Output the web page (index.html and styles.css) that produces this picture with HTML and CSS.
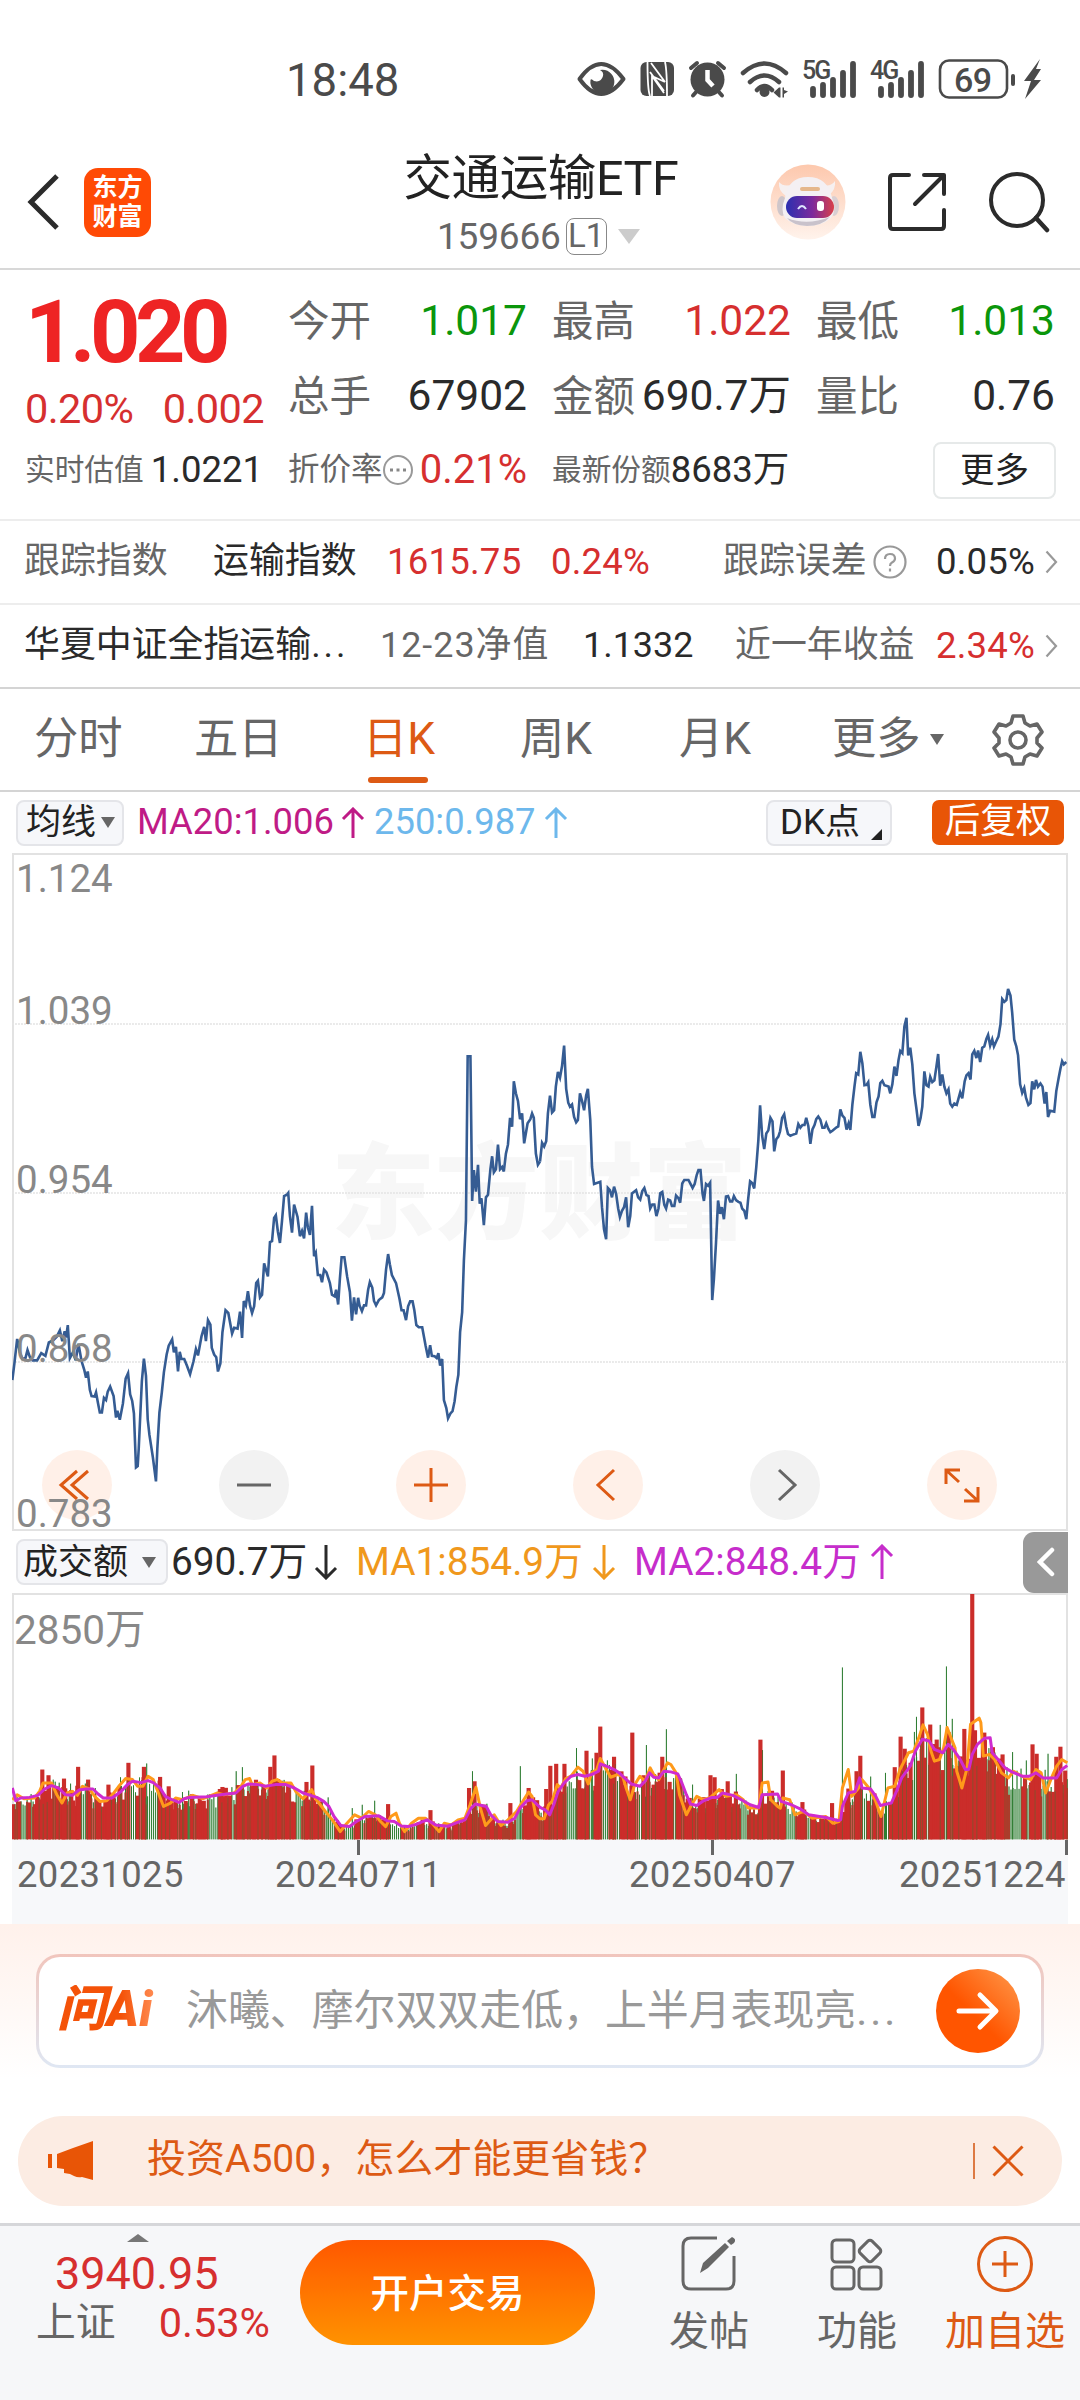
FILE: index.html
```html
<!DOCTYPE html>
<html lang="zh-CN">
<head>
    <meta charset="UTF-8">
    <meta name="viewport" content="width=device-width, initial-scale=1.0">
    <title>交通运输ETF 159666</title>
    <link rel="stylesheet" href="styles.css">
</head>
<body>
    <div class="status-bar">
        <span class="time">18:48</span>
        <svg class="status-icons" width="470" height="44" viewBox="574 57 470 44">
            <g fill="none" stroke="#4a4a4a" stroke-width="4">
                <path d="M579.500 79Q601 49 623.500 79Q601 109 579.500 79Z" stroke-linejoin="round"/>
                <path d="M743 73Q764.500 54 786 73M750 82Q764.500 69 779 82M757 90Q764.500 82 772 90" stroke-width="4.500" stroke-linecap="round"/>
                <path d="M691 68L697 63M718 63L724 68M697 91L693 95.500M718 91L722 95.500" stroke-linecap="round"/>
                <rect x="940" y="60.500" width="67" height="37" rx="9" stroke-width="2.600"/>
                <path d="M813 89V95M823 85V95M833 80V95M843 73V95M853 64V95M881 89V95M891 85V95M901 80V95M911 73V95M921 64V95" stroke-width="5.800" stroke-linecap="round"/>
                <path d="M1013 76V84" stroke-linecap="round"/>
            </g>
            <g fill="#4a4a4a">
                <path d="M600 70A12 12 0 1 1 590.500 80Q591 78 594 81Q601 83 603 76Q604 72 600 70Z"/>
                <rect x="640.500" y="62" width="33.500" height="34" rx="6"/>
                <circle cx="707.500" cy="79.500" r="17"/>
                <circle cx="764.500" cy="92" r="5"/>
                <path d="M773.500 92.500L779 87.500V97.500ZM779 87.500H780.500V97.500H779ZM782.500 87.500V97.500H784V94L788 91.500L784 90V87.500Z"/>
                <path d="M1040 59L1024 81H1031L1025 99L1041 80H1034L1041 69H1036Z"/>
            </g>
            <path d="M650 96Q647.500 90 647.500 62M651 63L665 82M652 96V76L664 93M652 76L665 82M665 62Q667 70 667 96M650 72L664 91" fill="none" stroke="#fff" stroke-width="1.800"/>
            <path d="M707.500 70V80L713 86" fill="none" stroke="#fff" stroke-width="4.500"/>
            <text class="net-label" x="802" y="79">5G</text>
            <text class="net-label" x="870" y="79">4G</text>
            <text class="battery-label" x="954" y="91.500">69</text>
        </svg>
    </div>

    <header class="header">
        <div class="header-left">
            <svg width="34" height="58" viewBox="0 0 34 58"><path d="M30 3L4 29L30 55" fill="none" stroke="#2b2b2b" stroke-width="5"/></svg>
            <div class="app-logo">东方<br>财富</div>
        </div>
        <div class="header-title">
            <h1>交通运输ETF</h1>
            <div class="code">159666<span class="level">L1</span><i class="tri tri-light"></i></div>
        </div>
        <div class="header-right">
            <svg width="76" height="76" viewBox="0 0 76 76">
                <defs>
                    <linearGradient id="avatarBg" x1="0" y1="0" x2="0" y2="1"><stop offset="0" stop-color="#fdc8ad"/><stop offset="1" stop-color="#fff3ec"/></linearGradient>
                    <linearGradient id="visor" x1="0" y1="0" x2="1" y2="0"><stop offset="0" stop-color="#2b2fb0"/><stop offset=".55" stop-color="#7d2a9c"/><stop offset="1" stop-color="#d8404a"/></linearGradient>
                </defs>
                <circle cx="38" cy="38" r="37.500" fill="url(#avatarBg)"/>
                <ellipse cx="12" cy="42" rx="5" ry="10" fill="#cfc6ca"/><ellipse cx="64" cy="42" rx="5" ry="10" fill="#d9cfd2"/>
                <path d="M9 18Q8 27 16 32L24 20Q14 24 9 18ZM65 17Q66 26 59 31L51 20Q60 24 65 17Z" fill="#f6f0f0"/>
                <path d="M15 34Q18 13 38 13Q58 13 62 34Q67 46 61 54Q52 62 37 62Q22 61 15 54Q10 46 15 34Z" fill="#f4f0f3"/>
                <path d="M17 54Q37 62 60 53Q52 62 37 62Q22 61 17 54Z" fill="#c9c2cb"/>
                <rect x="30" y="23" width="20" height="4" rx="2" fill="#e5b78c"/>
                <rect x="16" y="32" width="48" height="22" rx="11" fill="url(#visor)"/>
                <path d="M28 45Q32 39 36 45" fill="none" stroke="#dfe6ff" stroke-width="2"/>
                <rect x="47" y="37" width="7" height="10" rx="3" fill="#fff"/>
            </svg>
            <svg width="60" height="60" viewBox="0 0 60 60"><path d="M22 3H6Q3 3 3 6V54Q3 57 6 57H54Q57 57 57 54V38M37 3H57V22M56 4L28 32" fill="none" stroke="#2b2b2b" stroke-width="4" stroke-linecap="round" stroke-linejoin="round"/></svg>
            <svg width="62" height="64" viewBox="0 0 62 64"><circle cx="29" cy="30" r="26" fill="none" stroke="#2b2b2b" stroke-width="4"/><path d="M48 48L59 60" stroke="#2b2b2b" stroke-width="4.500" stroke-linecap="round"/></svg>
        </div>
    </header>

    <section class="quote">
        <div class="price-box">
            <div class="price">1.020</div>
            <div class="change"><span>0.20%</span><span>0.002</span></div>
        </div>
        <div class="quote-grid">
            <div class="cell"><span>今开</span><b class="green">1.017</b></div>
            <div class="cell"><span>最高</span><b class="red">1.022</b></div>
            <div class="cell"><span>最低</span><b class="green">1.013</b></div>
            <div class="cell"><span>总手</span><b>67902</b></div>
            <div class="cell"><span>金额</span><b>690.7万</b></div>
            <div class="cell"><span>量比</span><b>0.76</b></div>
        </div>
    </section>
    <section class="quote-sub">
        <div class="cell small"><span>实时估值</span><b>1.0221</b></div>
        <div class="cell small"><span class="rate">折价率</span>
            <svg width="32" height="32" viewBox="0 0 32 32"><circle cx="16" cy="16" r="14" fill="none" stroke="#999" stroke-width="2"/><path d="M8 16H11M14.500 16H17.500M21 16H24" stroke="#888" stroke-width="3"/></svg>
            <b class="red big">0.21%</b></div>
        <div class="cell small"><span>最新份额</span><b>8683万</b></div>
        <button class="more-btn">更多</button>
    </section>

    <section class="info-row track-row">
        <span>跟踪指数</span>
        <span class="dark">运输指数</span>
        <span class="red num">1615.75</span>
        <span class="red num">0.24%</span>
        <span class="tip">跟踪误差<svg width="34" height="34" viewBox="0 0 34 34"><circle cx="17" cy="17" r="15.500" fill="none" stroke="#999" stroke-width="2.200"/><path d="M12 14Q12 9 17 9Q22 9 22 13.500Q22 16 19 17.500Q17 18.500 17 21M17 23.500V26.500" fill="none" stroke="#999" stroke-width="2.200"/></svg></span>
        <span class="dark num">0.05%</span>
        <svg class="chev" width="13" height="24" viewBox="0 0 13 24"><path d="M1.500 1.500L11 12L1.500 22.500" fill="none" stroke="#999" stroke-width="2.200"/></svg>
    </section>
    <section class="info-row fund-row">
        <span class="dark">华夏中证全指运输<span class="dots">...</span></span>
        <span class="nav-date">12-23净值</span>
        <span class="dark">1.1332</span>
        <span>近一年收益</span>
        <span class="red num">2.34%</span>
        <svg class="chev" width="13" height="24" viewBox="0 0 13 24"><path d="M1.500 1.500L11 12L1.500 22.500" fill="none" stroke="#999" stroke-width="2.200"/></svg>
    </section>

    <nav class="tabs">
        <span>分时</span>
        <span>五日</span>
        <span class="active">日K</span>
        <span>周K</span>
        <span>月K</span>
        <span>更多<i class="tri tri-small"></i></span>
        <svg width="54" height="54" viewBox="0 0 54 54"><path d="M22 3H32L34 10L39 13L46 11L51 19L46 25V30L51 35L46 43L39 41L34 44L32 51H22L20 44L15 41L8 43L3 35L8 30V25L3 19L8 11L15 13L20 10Z" fill="none" stroke="#666" stroke-width="3.600" stroke-linejoin="round"/><circle cx="27" cy="27" r="8" fill="none" stroke="#666" stroke-width="3.600"/></svg>
    </nav>

    <div class="ma-row">
        <span class="select ma-select">均线<i class="tri tri-small"></i></span>
        <span class="ma20">MA20:1.006</span>
        <svg class="arrow ma20" width="24" height="32" viewBox="0 0 24 32"><path d="M12 31V2M2 12L12 2L22 12"/></svg>
        <span class="ma250">250:0.987</span>
        <svg class="arrow ma250" width="24" height="32" viewBox="0 0 24 32"><path d="M12 31V2M2 12L12 2L22 12"/></svg>
        <span class="select dk">DK点<i class="corner"></i></span>
        <span class="adjust">后复权</span>
    </div>

    <div class="chart">
        <div class="watermark">东方财富</div>
        <svg class="chart-svg" viewBox="35 9 3066 1514" preserveAspectRatio="none">
            <path class="grid-line" d="M35 390H3101M35 768H3101M35 1147H3101"/>
            <polyline class="price-line" points="36,1187 42,1150 50,1095 58,1125 65,1140 74,1138 80,1120 87,1136 95,1143 108,1143 120,1127 132,1133 142,1103 155,1098 165,1090 174,1076 181,1100 188,1078 192,1092 197,1064 203,1138 212,1125 220,1143 228,1106 237,1145 245,1165 250,1182 255,1168 261,1209 266,1223 275,1224 279,1215 285,1240 290,1260 296,1260 302,1227 308,1232 313,1213 320,1202 330,1223 337,1271 341,1256 348,1276 357,1240 365,1184 372,1172 378,1219 384,1234 389,1262 395,1383 400,1380 403,1340 412,1190 418,1139 424,1178 429,1275 434,1310 444,1360 453,1414 457,1340 463,1260 470,1215 476,1170 484,1130 490,1110 500,1096 505,1125 511,1113 517,1168 522,1124 527,1140 535,1140 543,1155 552,1174 562,1145 569,1118 575,1132 585,1090 593,1068 598,1100 604,1053 611,1063 615,1115 622,1130 628,1136 633,1168 640,1150 646,1080 655,1031 663,1037 674,1083 680,1070 690,1072 697,1034 703,1093 708,1010 714,1020 720,988 726,1020 732,1037 738,1022 744,970 749,965 755,1002 761,996 767,926 778,955 784,878 790,876 796,824 801,818 807,855 813,880 819,830 825,775 833,772 837,768 842,820 848,857 854,794 864,822 871,865 877,853 883,870 889,812 894,845 900,862 906,797 912,910 917,902 923,952 930,952 935,968 941,940 948,946 958,970 964,996 972,1000 976,985 982,1018 987,960 992,912 1000,912 1008,955 1016,990 1022,1054 1028,1002 1034,1040 1040,1003 1044,1020 1051,1033 1057,1020 1063,1020 1069,985 1074,968 1081,980 1086,1010 1092,1020 1100,1008 1110,1002 1115,992 1121,940 1127,905 1132,928 1138,952 1150,970 1160,1005 1166,1031 1172,1031 1179,1053 1185,1022 1191,1011 1198,1011 1203,1030 1209,1064 1216,1069 1226,1069 1236,1111 1243,1137 1249,1109 1254,1133 1262,1134 1268,1138 1273,1127 1278,1155 1284,1140 1289,1232 1296,1250 1301,1273 1308,1262 1314,1257 1320,1235 1325,1203 1331,1175 1336,1080 1342,1035 1347,920 1353,830 1358,462 1366,462 1371,786 1376,717 1382,765 1388,705 1393,792 1398,780 1405,840 1411,778 1417,772 1424,715 1429,686 1434,722 1440,715 1446,660 1452,715 1458,710 1463,720 1469,680 1475,660 1481,600 1487,620 1492,518 1498,545 1504,562 1510,603 1516,590 1522,657 1532,612 1540,603 1545,590 1550,600 1556,680 1562,705 1568,698"/>
            <polyline class="price-line" transform="translate(1568 0)" points="0,698 6,656 12,664 18,652 23,590 29,550 35,588 41,583 46,530 52,497 58,510 64,484 70,438 76,535 82,566 87,575 93,570 99,598 105,610 110,605 116,545 122,562 128,583 134,550 139,535 146,605 151,710 157,748 175,743 180,800 186,850 192,872 197,757 203,762 209,778 215,754 221,770 227,803 232,822 238,808 244,800 250,778 256,845 262,820 267,769 279,762 285,778 291,783 297,764 303,757 309,773 315,775 320,803 326,794 332,794 338,820 344,803 349,769 355,766 361,795 366,803 372,783 378,785 383,797 390,797 395,774 402,780 407,790 413,747 419,739 431,739 437,748 443,757 449,748 455,728 460,717 466,717 472,770 476,786 482,748 488,752 494,745 500,1008 505,960 511,880 517,785 523,815 528,800 534,827 540,776 546,775 552,787 558,787 563,775 569,784 576,788 582,790 587,803 593,808 599,827 604,785 610,742 616,746 622,758 628,710 634,650 639,572 645,640 651,670 657,635 663,628 669,600 675,608 680,675 686,648 692,642 697,630 703,600 709,592 715,620 720,636 727,640 733,638 744,635 750,614 756,622 762,616 768,616 773,600 779,618 785,658 791,626 797,616 802,603 808,597 814,604 820,622 826,622 831,612 837,624 843,632 849,629 861,621 866,619 872,581 878,595 884,600 890,626 896,612 901,627 907,570 913,530 918,500 924,503 930,452 936,478 942,527 948,526 953,520 959,570 965,598 971,598 977,565 983,552 988,522 994,517 1000,527 1012,530 1017,545 1023,525 1029,485 1035,506 1041,470 1046,450 1052,455 1058,395 1064,376 1069,460 1075,443 1081,480 1087,545 1093,580 1099,618 1105,600 1110,575 1116,496 1122,527 1128,530 1133,508 1139,520 1145,516 1151,485 1156,457 1162,528 1168,503 1174,530 1180,545 1186,536 1191,568 1197,575 1203,568 1210,571 1220,543 1226,556 1233,518 1238,505 1244,500 1250,514 1255,458 1261,450 1267,466 1272,449 1278,475 1284,443 1290,440 1296,423 1301,414 1307,438 1313,424 1318,440 1325,428 1331,418 1337,390 1342,334 1348,340 1354,336 1359,311 1366,326 1371,365 1377,425 1383,440 1388,460 1394,525 1400,544 1406,533 1411,555 1418,571 1424,567 1429,518 1435,536 1440,515 1446,530 1453,523 1459,530 1465,568 1470,542 1475,598 1481,584 1493,586 1499,540 1506,510 1511,490 1516,473 1521,480 1528,475"/>
        </svg>
        <div class="tools">
            <svg class="tool warm" viewBox="0 0 70 70"><path d="M35 21L19 35L35 49M46 21L30 35L46 49"/></svg>
            <svg class="tool" viewBox="0 0 70 70"><path d="M18 35H52"/></svg>
            <svg class="tool warm" viewBox="0 0 70 70"><path d="M18 35H52M35 18V52"/></svg>
            <svg class="tool warm" viewBox="0 0 70 70"><path d="M41 20L25 35L41 50"/></svg>
            <svg class="tool" viewBox="0 0 70 70"><path d="M29 20L45 35L29 50"/></svg>
            <svg class="tool warm" viewBox="0 0 70 70"><path d="M19 34V20H33M20 21L32 32M51 37V51H37M50 50L38 39"/></svg>
        </div>
        <div class="y-labels">
            <span>1.124</span>
            <span>1.039</span>
            <span>0.954</span>
            <span>0.868</span>
            <span>0.783</span>
        </div>
    </div>

    <div class="vol-row">
        <span class="select vol-select">成交额<i class="tri tri-small"></i></span>
        <span class="dark vol-now">690.7万</span>
        <svg class="arrow dark" width="24" height="36" viewBox="0 0 24 36"><path d="M12 1V34M2 24L12 34L22 24"/></svg>
        <span class="vol-ma1">MA1:854.9万</span>
        <svg class="arrow vol-ma1" width="24" height="36" viewBox="0 0 24 36"><path d="M12 1V34M2 24L12 34L22 24"/></svg>
        <span class="vol-ma2">MA2:848.4万</span>
        <svg class="arrow vol-ma2" width="24" height="36" viewBox="0 0 24 36"><path d="M12 35V2M2 12L12 2L22 12"/></svg>
        <span class="side-tab"><svg width="18" height="30" viewBox="0 0 18 30"><path d="M15 3L3 15L15 27" fill="none" stroke="#fff" stroke-width="4.500" stroke-linecap="round"/></svg></span>
    </div>
    <div class="vol-chart">
        <svg class="chart-svg" id="volume" viewBox="35 222 3066 733" preserveAspectRatio="none"></svg>
        <span class="vol-max">2850万</span>
    </div>
    <div class="date-axis">
        <span>20231025</span>
        <span class="d2">20240711</span>
        <span class="d3">20250407</span>
        <span class="d4">20251224</span>
    </div>

    <section class="ai-area">
        <div class="ai-box">
            <span class="ai-logo">问Ai</span>
            <span class="ai-text">沐曦、摩尔双双走低，上半月表现亮<span class="dots">...</span></span>
            <span class="ai-go"><svg width="44" height="40" viewBox="0 0 44 40"><path d="M3 20H39M24 4L40 20L24 36" fill="none" stroke="#fff" stroke-width="5" stroke-linecap="round" stroke-linejoin="round"/></svg></span>
        </div>
        <div class="promo">
            <svg width="46" height="40" viewBox="0 0 46 40"><path d="M0 13H4V27H0ZM9 13L25 7L45 0V39L34 36Q30 37 26 35L22 33L16 32V28L9 27Z" fill="#e85506"/></svg>
            <span class="promo-text">投资A500，怎么才能更省钱？</span>
            <i class="promo-line"></i>
            <svg width="32" height="32" viewBox="0 0 32 32"><path d="M1.500 1.500L30.500 30.500M30.500 1.500L1.500 30.500" stroke="#dd5a14" stroke-width="3"/></svg>
        </div>
    </section>

    <footer class="bottom-bar">
        <div class="index-box">
            <i class="tri-up"></i>
            <div class="index-value">3940.95</div>
            <div class="index-line"><span>上证</span><b>0.53%</b></div>
        </div>
        <button class="trade-btn">开户交易</button>
        <div class="action post">
            <svg width="56" height="56" viewBox="0 0 56 56"><path d="M36 2H10Q2 2 2 10V45Q2 53 10 53H45Q53 53 53 45V20" fill="none" stroke="#666" stroke-width="3"/><path d="M19 37L22 27L44 7L48 11L27 32ZM46 5L51 1Q56 3 53 7L50 9Z" fill="#666"/></svg>
            <span>发帖</span>
        </div>
        <div class="action func">
            <svg width="56" height="56" viewBox="0 0 56 56"><g fill="none" stroke="#666" stroke-width="3"><rect x="3" y="4" width="22" height="22" rx="4"/><rect x="3" y="31" width="22" height="22" rx="4"/><rect x="30" y="31" width="22" height="22" rx="4"/><rect x="32.500" y="6.500" width="17" height="17" rx="3" transform="rotate(45 41 15)"/></g></svg>
            <span>功能</span>
        </div>
        <div class="action fav">
            <svg width="56" height="56" viewBox="0 0 56 56"><circle cx="28" cy="28" r="26.500" fill="none" stroke="#dd5a14" stroke-width="3"/><path d="M15 28H41M28 15V41" stroke="#dd5a14" stroke-width="3"/></svg>
            <span>加自选</span>
        </div>
    </footer>

    <script src="chart.js"></script>
</body>
</html>
```
FILE: styles.css
```css
* {
    box-sizing: border-box;
}

body {
    margin: 0;
    width: 1080px;
    height: 2400px;
    overflow: hidden;
    background: #fff;
    color: #666;
    font-family: Roboto, "Noto Sans CJK SC", sans-serif;
    line-height: 1;
    white-space: nowrap;
}

i {
    display: inline-block;
}

svg {
    display: block;
    flex-shrink: 0;
}

b {
    font-weight: 400;
    color: #2a2a2a;
}

.dark {
    color: #2a2a2a;
}

.red {
    color: #d62f2f;
}

.green {
    color: #0b960b;
}

/* 状态栏 */
.status-bar {
    display: flex;
    align-items: center;
    height: 158px;
    padding: 0 36px 0 286px;
}

.time {
    width: 288px;
    padding-top: 3px;
    font-size: 45.5px;
    color: #4a4a4a;
}

.net-label {
    font-size: 25px;
    font-weight: 500;
    letter-spacing: -2px;
    fill: #4a4a4a;
}

.battery-label {
    font-size: 34px;
    font-weight: 500;
    letter-spacing: -0.5px;
    fill: #4a4a4a;
}

/* 顶部标题 */
.header {
    display: grid;
    grid-template-columns: 404px 274px 1fr;
    height: 112px;
    padding-bottom: 2px;
    border-bottom: 2px solid #d8d8d8;
}

.header-left {
    display: flex;
    align-items: center;
    padding: 0 0 20px 27px;
    gap: 23px;
}

.app-logo {
    width: 67px;
    height: 69px;
    padding-top: 5px;
    border-radius: 14px;
    background: #ff4a05;
    color: #fff;
    font-size: 25px;
    font-weight: 700;
    line-height: 29px;
    text-align: center;
}

.header-title {
    display: flex;
    flex-direction: column;
    align-items: center;
    margin-top: -3px;
}

h1 {
    margin: 0;
    font-size: 48.5px;
    font-weight: 400;
    color: #222;
    letter-spacing: -0.4px;
}

.code {
    display: flex;
    align-items: center;
    align-self: flex-start;
    margin: 14px 0 0 33px;
    font-size: 37px;
    letter-spacing: -0.2px;
}

.level {
    width: 41px;
    height: 37px;
    margin-left: 5px;
    border: 1.5px solid #888;
    border-radius: 8px;
    font-size: 33px;
    line-height: 34px;
    text-align: center;
}

.tri {
    border-style: solid;
    border-color: #666 transparent transparent;
    border-width: 11px 7.5px 0;
}

.tri-light {
    border-width: 15px 11px 0;
    border-top-color: #ccc;
    margin-left: 11px;
}

.header-right {
    display: flex;
    align-items: center;
    padding: 0 0 20px 92px;
    gap: 41px;
}

/* 行情 */
.quote {
    display: flex;
    height: 162px;
    padding-left: 25px;
}

.price-box {
    width: 263px;
}

.price {
    margin-top: 18px;
    font-size: 88px;
    font-weight: 700;
    letter-spacing: -5.5px;
    color: #ee2424;
}

.change {
    display: flex;
    justify-content: space-between;
    width: 239px;
    margin-top: 12px;
    font-size: 41.5px;
    letter-spacing: -0.6px;
    color: #d62f2f;
}

.quote-grid {
    display: grid;
    grid-template-columns: 239px 239px 239px;
    grid-template-rows: 75px 75px;
    column-gap: 25px;
    padding-top: 14px;
}

.cell {
    display: flex;
    align-items: center;
    justify-content: space-between;
    font-size: 41.5px;
}

.cell b {
    font-size: 42.5px;
}

.cell b.red {
    color: #d62f2f;
}

.cell b.green {
    color: #0b960b;
}

.quote-sub {
    display: grid;
    grid-template-columns: 238px 239px 237px 1fr;
    column-gap: 25px;
    align-items: center;
    height: 87px;
    padding: 0 24px 11px 25px;
}

.cell.small {
    font-size: 29.7px;
}

.cell.small b {
    font-size: 36.5px;
}

.cell.small b.big {
    font-size: 40px;
}

.rate {
    font-size: 31.5px;
    margin-right: -6px;
}

.more-btn {
    justify-self: end;
    width: 123px;
    height: 57px;
    border: 2px solid #e6e9e9;
    border-radius: 8px;
    background: #fff;
    color: #222;
    font: 34.5px/1 "Noto Sans CJK SC", sans-serif;
    padding: 0 0 5px;
}

/* 指数信息 */
.info-row {
    display: grid;
    align-items: center;
    padding-left: 24px;
    font-size: 35.9px;
    border-top: 2px solid #ededed;
}

.num {
    font-size: 36.6px;
    letter-spacing: 0.2px;
}

.track-row {
    height: 84px;
    grid-template-columns: 189px 174px 164px 172px 213px 109px 13px;
}

.fund-row {
    height: 84px;
    grid-template-columns: 356px 203px 152px 201px 109px 13px;
}

.dots {
    letter-spacing: 3px;
}

.nav-date {
    letter-spacing: 1px;
}

.tip {
    display: flex;
    align-items: center;
    gap: 6px;
}

/* 周期切换 */
.tabs {
    display: grid;
    grid-template-columns: 160px 169px 157px 159px 153px 159px 54px;
    align-items: center;
    height: 105px;
    padding-left: 34px;
    border-top: 2px solid #d4d4d4;
    border-bottom: 2px solid #d4d4d4;
    font-size: 44.3px;
}

.tabs span {
    display: flex;
    align-items: center;
    height: 100%;
}

.tabs .tri {
    margin-left: 9px;
}

.tabs .active {
    position: relative;
    color: #dd5a14;
}

.tabs .active::after {
    content: "";
    position: absolute;
    left: 5px;
    bottom: 7px;
    width: 60px;
    height: 6px;
    border-radius: 3px;
    background: #dd5a14;
}

/* 均线 */
.ma-row {
    display: flex;
    align-items: center;
    height: 61px;
    padding: 0 16px;
    font-size: 36.4px;
}

.select {
    display: flex;
    align-items: center;
    height: 46px;
    border: 2px solid #e4e5e9;
    border-radius: 8px;
    background: #f6f7fa;
    color: #222;
    font-size: 35px;
}

.ma-select {
    width: 108px;
    padding-left: 8px;
    gap: 5px;
    margin-right: 13px;
}

.ma-row .ma20 {
    color: #bf1b86;
    stroke: #bf1b86;
}

.ma-row .ma250 {
    color: #6db8ec;
    stroke: #6db8ec;
}

.ma-row span.ma20 {
    width: 204px;
    stroke: none;
}

.ma-row span.ma250 {
    width: 170px;
    margin-left: 9px;
    stroke: none;
}

.arrow {
    fill: none;
    stroke-width: 3;
}

.dk {
    width: 126px;
    margin-left: auto;
    padding-left: 12px;
}

.corner {
    align-self: flex-end;
    margin: 0 0 4px 11px;
    border-style: solid;
    border-width: 0 0 11px 11px;
    border-color: transparent transparent #222;
}

.adjust {
    width: 132px;
    height: 45px;
    margin-left: 40px;
    border-radius: 7px;
    background: #e85506;
    color: #fff;
    font-size: 35.5px;
    line-height: 43px;
    text-align: center;
}

/* K线图 */
.chart {
    position: relative;
    height: 678px;
    margin: 0 12px;
    border: 2px solid #e2e2e2;
}

.chart-svg {
    position: absolute;
    left: -2px;
    top: -1px;
    width: calc(100% + 4px);
    height: calc(100% + 2px);
}

.grid-line {
    stroke: #e4e4e4;
    stroke-width: 1.5;
    stroke-dasharray: 2 1;
    vector-effect: non-scaling-stroke;
}

.price-line {
    fill: none;
    stroke: #355c93;
    stroke-width: 2.6;
    vector-effect: non-scaling-stroke;
}

.watermark {
    position: absolute;
    left: 317px;
    top: 289px;
    font-size: 104px;
    font-weight: 900;
    color: #f7f7f7;
}

.tools {
    position: absolute;
    left: 28px;
    right: 69px;
    top: 595px;
    display: flex;
    justify-content: space-between;
}

.tool {
    width: 70px;
    height: 70px;
    border-radius: 50%;
    background: #f2f2f2;
    fill: none;
    stroke: #666;
    stroke-width: 3;
}

.tool.warm {
    background: rgba(255, 236, 226, 0.8);
    stroke: #dd5a14;
}

.y-labels {
    position: absolute;
    left: 2px;
    top: 5px;
    display: grid;
    grid-template-rows: 132px 169px 169px 165px 40px;
    font-size: 38.5px;
    color: #888;
}

/* 成交额 */
.vol-row {
    display: flex;
    align-items: center;
    height: 62px;
    padding-left: 16px;
    margin-right: 12px;
    font-size: 38.8px;
}

.vol-select {
    width: 152px;
    padding-left: 5px;
    gap: 14px;
}

.vol-now {
    width: 140px;
    margin-left: 3px;
}

.arrow.dark {
    stroke: #2a2a2a;
    margin-left: 3px;
}

span.vol-ma1 {
    width: 236px;
    margin-left: 18px;
    color: #f0981c;
}

svg.vol-ma1 {
    stroke: #f0981c;
}

span.vol-ma2 {
    width: 236px;
    margin-left: 18px;
    color: #c62dcb;
}

svg.vol-ma2 {
    stroke: #c62dcb;
}

.side-tab {
    display: flex;
    align-items: center;
    justify-content: center;
    width: 45px;
    height: 61px;
    margin-left: auto;
    border-radius: 11px 0 0 11px;
    background: #999;
}

.vol-chart {
    position: relative;
    height: 246px;
    margin: 0 12px;
    border: 2px solid #e2e2e2;
    border-width: 2px 2px 0 2px;
}

.vol-max {
    position: absolute;
    left: 0;
    top: 15px;
    font-size: 40.5px;
    color: #888;
}

.bar-up {
    fill: #cb2d2a;
}

.bar-down {
    fill: #2e7d32;
}

.line-ma1,
.line-ma2 {
    fill: none;
    stroke: #ff9a1a;
    stroke-width: 3;
    stroke-linejoin: round;
    vector-effect: non-scaling-stroke;
}

.line-ma2 {
    stroke: #cf2bcf;
}

.date-axis {
    display: grid;
    grid-template-columns: 258px 354px 270px 168px;
    height: 85px;
    margin: 0 12px;
    padding: 18px 0 0 5px;
    background: linear-gradient(#666, #666) 345px 1px / 3px 15px no-repeat,
        linear-gradient(#666, #666) 699px 1px / 3px 15px no-repeat,
        linear-gradient(#666, #666) 100% 1px / 3px 15px no-repeat,
        #f7f8fa;
    font-size: 36.4px;
    letter-spacing: 0.4px;
}

/* AI问答 */
.ai-area {
    height: 299px;
    padding-top: 30px;
    background: linear-gradient(#fff1eb, #fff 155px);
}

.ai-box {
    display: flex;
    align-items: center;
    width: 1008px;
    height: 114px;
    margin-left: 36px;
    padding: 0 21px 0 17px;
    border: 3px solid transparent;
    border-radius: 24px;
    background: linear-gradient(#fff, #fff) padding-box, linear-gradient(#f1c5bc, #dfe7f3) border-box;
}

.ai-logo {
    width: 130px;
    padding: 0 4px 3px 1px;
    font-size: 49px;
    font-weight: 900;
    font-style: italic;
    letter-spacing: 0.5px;
    background: linear-gradient(90deg, #f45208 50%, #ff8a50 75%);
    background-clip: text;
    -webkit-background-clip: text;
    color: transparent;
}

.ai-text {
    flex: 1;
    font-size: 41.9px;
    color: #999;
}

.ai-go {
    display: flex;
    align-items: center;
    justify-content: center;
    width: 84px;
    height: 84px;
    border-radius: 50%;
    background: linear-gradient(45deg, #ff5500 45%, #ff8f40 90%);
}

.promo {
    display: flex;
    align-items: center;
    height: 90px;
    margin: 48px 18px 0;
    padding: 0 38px 0 30px;
    border-radius: 45px;
    background: #fcece3;
    color: #dd5a14;
    font-size: 39px;
}

.promo-text {
    flex: 1;
    margin: -3px 0 0 53px;
}

.promo-line {
    width: 2px;
    height: 36px;
    margin-right: 17px;
    background: #dd7a44;
}

/* 底部栏 */
.bottom-bar {
    display: flex;
    height: 177px;
    border-top: 3px solid #d6d7da;
    background: #f6f7f9;
}

.index-box {
    width: 300px;
    padding: 8px 0 0 36px;
}

.tri-up {
    display: block;
    width: 0;
    margin-left: 91px;
    border-style: solid;
    border-width: 0 11px 8px;
    border-color: transparent transparent #777;
}

.index-value {
    margin: 9px 0 0 19px;
    font-size: 45px;
    color: #d62f2f;
}

.index-line {
    display: flex;
    align-items: center;
    justify-content: space-between;
    width: 234px;
    margin-top: 6px;
    font-size: 39.8px;
}

.index-line b {
    font-size: 41.5px;
    color: #d62f2f;
}

.trade-btn {
    width: 295px;
    height: 105px;
    margin-top: 14px;
    padding-bottom: 5px;
    border: none;
    border-radius: 53px;
    background: linear-gradient(#ff5800, #ff9200);
    color: #fff;
    font: 500 38.5px/1 "Noto Sans CJK SC", sans-serif;
}

.action {
    display: flex;
    flex-direction: column;
    align-items: center;
    padding-top: 10px;
    gap: 20px;
    font-size: 40px;
}

.post {
    margin-left: 74px;
}

.func {
    margin-left: 68px;
}

.fav {
    margin-left: 48px;
    color: #dd5a14;
}
```
FILE: chart.js
```js
// 成交额均线，坐标为图内坐标，y 越小数值越大
const ma2 = [36,800,46,838,60,830,85,828,110,822,130,803,150,793,170,800,190,820,210,822,230,806,250,803,270,803,285,818,300,830,325,830,350,812,370,790,385,780,410,784,430,778,445,784,465,800,480,825,500,835,520,843,535,832,550,828,600,826,640,820,685,815,705,795,722,788,750,790,770,795,800,790,830,790,855,800,880,815,920,828,940,840,955,855,970,885,990,912,1015,915,1035,900,1060,885,1100,883,1125,898,1145,900,1165,913,1185,915,1210,908,1240,895,1265,910,1300,914,1330,902,1350,895,1368,860,1380,848,1412,855,1425,880,1445,900,1475,902,1495,890,1510,860,1530,838,1545,835,
    1568,858,1583,865,1596,880,1608,850,1620,812,1638,785,1658,765,1678,760,1698,765,1718,760,1738,750,1743,728,1768,738,1783,745,1798,755,1813,770,1833,788,1858,795,1873,780,1886,755,1898,768,1913,770,1928,750,1948,752,1968,758,1980,785,1993,820,2005,848,2023,852,2043,838,2068,828,2083,828,2098,815,2128,822,2158,838,2178,850,2203,858,2213,820,2258,818,2268,840,2298,850,2323,862,2348,880,2398,888,2433,897,2441,895,2446,855,2463,815,2483,810,2496,770,2503,800,2528,803,2543,825,2556,852,2588,845,2603,810,2618,770,2643,735,2658,690,2678,655,2698,660,2713,685,2738,695,2753,670,2768,685,2788,715,2803,745,2813,745,2823,700,2838,670,2858,652,2875,650,2881,695,2898,715,2918,740,2938,752,2968,765,2988,765,3008,755,3028,770,3068,770,3083,745,3099,733];

const ma1 = [36,835,50,820,70,832,100,830,115,810,125,785,150,785,165,820,180,845,195,815,210,810,225,822,240,795,260,803,275,825,290,840,310,838,325,822,345,795,365,772,385,775,400,795,415,795,430,765,445,775,460,815,475,855,495,845,510,830,530,835,560,822,590,832,630,815,650,820,680,815,700,795,712,775,725,772,732,790,755,785,775,800,790,780,805,775,820,785,845,785,860,812,880,832,905,805,915,830,930,850,945,870,965,895,988,930,1005,908,1030,880,1050,890,1070,870,1090,880,1105,900,1120,915,1135,885,1150,875,1160,905,1175,930,1195,905,1215,890,1235,890,1255,905,1275,930,1290,905,1310,910,1330,895,1350,890,1365,850,1382,798,1395,860,1410,912,1425,895,1435,880,1455,912,1475,895,1500,870,1515,845,1535,812,1545,825,1555,880,
    1568,892,1580,892,1593,850,1603,840,1618,790,1628,800,1643,772,1658,765,1678,738,1693,750,1708,788,1718,755,1733,745,1743,712,1758,740,1773,768,1793,760,1808,765,1818,800,1830,835,1843,790,1858,765,1873,780,1888,740,1898,760,1913,775,1928,745,1938,725,1948,730,1963,755,1973,820,1993,880,2008,850,2023,825,2043,835,2063,828,2088,805,2108,825,2138,820,2158,835,2173,860,2203,860,2213,785,2230,782,2238,835,2258,855,2266,860,2273,830,2293,835,2308,880,2333,870,2358,890,2398,885,2418,905,2436,900,2446,800,2463,745,2473,825,2493,800,2503,775,2523,800,2543,840,2558,885,2578,800,2598,795,2613,745,2638,695,2653,690,2668,650,2680,612,2693,640,2703,690,2713,720,2728,715,2740,680,2750,620,2763,655,2773,680,2778,750,2793,800,2808,740,2818,610,2843,592,2848,605,2855,705,2873,700,2888,715,2908,755,2928,770,2943,750,2968,765,2993,775,3008,745,3023,755,3036,815,3053,770,3068,735,3083,715,3099,725];

// 放量日 [x, y]
const upPeaks = [[123,745],[141,762],[186,772],[227,737],[256,775],[315,790],[373,725],[418,737],[465,767],[490,795],[646,797],[785,737],[797,703],[890,782],[907,733],[1127,848],[1250,866],[1362,800],[1378,780],[1482,845],[1535,800],[1586,803],[1598,734],[1615,728],[1639,728],[1703,689],[1732,695],[1743,617],[1783,707],[1836,635],[1923,707],[2063,762],[2075,768],[2113,780],[2208,656],[2273,748],[2330,842],[2416,845],[2487,750],[2498,704],[2598,738],[2615,647],[2627,683],[2678,560],[2701,611],[2800,624],[2823,222],[2831,628],[2858,635],[2911,700],[2998,670],[3010,698],[3067,707],[3079,677]];
const downPeaks = [[205,787],[350,768],[426,727],[530,812],[548,808],[686,750],[704,738],[953,828],[1023,860],[1052,850],[1088,838],[1372,750],[1511,735],[1674,681],[1720,712],[1877,672],[1935,625],[2011,790],[2138,758],[2214,687],[2446,441],[2528,766],[2571,755],[2655,633],[2661,588],[2730,612],[2748,438],[2765,594],[2940,693],[2980,718],[3043,698]];

// 连续下跌区间
const downRanges = [[58,72],[88,92],[236,256],[378,396],[428,456],[544,552],[608,632],[670,682],[858,870],[948,970],[1006,1022],[1046,1052],[1130,1166],[1202,1212],[1230,1238],[1290,1300],[1500,1512],[1644,1674],[1712,1722],[1748,1766],[1792,1802],[1856,1862],[1955,1962],[2156,2168],[2282,2304],[2346,2352],[2500,2514],[2524,2530],[2566,2578],[2650,2664],[2692,2698],[2745,2751],[2932,2966],[2982,2990],[3030,3036]];

const BASE = 953;
const STEP = 5.83;
let seed = 11;

function rand() {
    seed = (seed * 16807) % 2147483647;
    return seed / 2147483647;
}

function valueAt(line, x) {
    for (let i = 2; i < line.length; i += 2) {
        if (x <= line[i]) {
            const t = (x - line[i - 2]) / (line[i] - line[i - 2]);
            return line[i - 1] + (line[i + 1] - line[i - 1]) * t;
        }
    }
    return line[line.length - 1];
}

function rect(cls, x, y, w) {
    return `<rect class="${cls}" x="${(x - w / 2).toFixed(1)}" y="${y.toFixed(1)}" width="${w}" height="${(BASE - y).toFixed(1)}"/>`;
}

let ups = '';
let downs = '';
for (let x = 38; x < 3100; x += STEP) {
    const avg = BASE - valueAt(ma2, x);
    const y = BASE - avg * (0.72 + rand() * 0.42);
    const isDown = downRanges.some(r => x >= r[0] - 2 && x <= r[1] + 2);
    if (isDown) {
        downs += rect('bar-down', x, y, 2.9);
    } else if (rand() < 0.42) {
        downs += rect('bar-down', x, y, 2.9);
        // 相邻红柱覆盖的部分
        ups += rect('bar-up', x, Math.min(BASE, y + avg * 0.12), 6);
    } else {
        ups += rect('bar-up', x, y, 12);
    }
}
upPeaks.forEach(p => ups += rect('bar-up', p[0], p[1], 12));
downPeaks.forEach(p => downs += rect('bar-down', p[0], p[1], 2.9));

document.getElementById('volume').innerHTML =
    `<g>${downs}</g>${ups}<g opacity="0.4">${downs}</g>` +
    `<polyline class="line-ma1" points="${ma1.join(' ')}"/>` +
    `<polyline class="line-ma2" points="${ma2.join(' ')}"/>`;
```
